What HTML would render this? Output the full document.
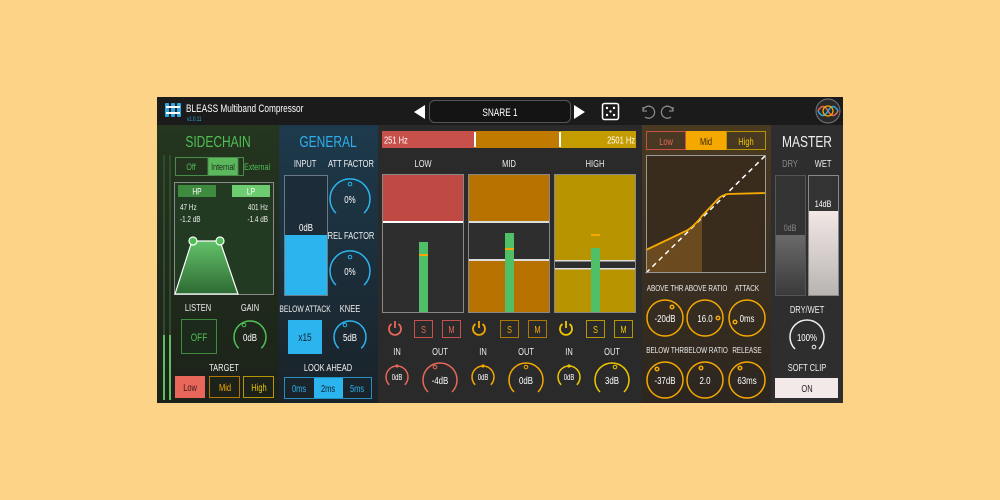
<!DOCTYPE html>
<html><head><meta charset="utf-8"><style>
html,body{margin:0;padding:0;background:#fdd487;width:1000px;height:500px;overflow:hidden}
svg{display:block}
text{font-family:"Liberation Sans",sans-serif;transform-box:fill-box;transform-origin:center;transform:scaleX(0.75)}
</style></head><body>
<svg width="1000" height="500" viewBox="0 0 1000 500" xmlns="http://www.w3.org/2000/svg">
<defs>
<linearGradient id="sc" x1="0" y1="0" x2="0" y2="1"><stop offset="0" stop-color="#24361f"/><stop offset="1" stop-color="#1c2119"/></linearGradient>
<linearGradient id="gn" x1="0" y1="0" x2="0" y2="1"><stop offset="0" stop-color="#1d3a4c"/><stop offset="1" stop-color="#1a2229"/></linearGradient>
<linearGradient id="cp" x1="0" y1="0" x2="0" y2="1"><stop offset="0" stop-color="#4a3a22"/><stop offset="1" stop-color="#2c2620"/></linearGradient>
<linearGradient id="flt" x1="0" y1="0" x2="0" y2="1"><stop offset="0" stop-color="#63c26a"/><stop offset="1" stop-color="#2d6a33"/></linearGradient>
<linearGradient id="dry" x1="0" y1="0" x2="0" y2="1"><stop offset="0" stop-color="#6a6a6a"/><stop offset="1" stop-color="#3a3a3a"/></linearGradient>
<linearGradient id="wet" x1="0" y1="0" x2="0" y2="1"><stop offset="0" stop-color="#f2e8e6"/><stop offset="1" stop-color="#b8b4b2"/></linearGradient>
</defs>
<rect x="157" y="97" width="686" height="306" fill="#1b1b1b"/>
<rect x="157" y="125" width="122" height="278" fill="url(#sc)"/>
<rect x="279" y="125" width="99" height="278" fill="url(#gn)"/>
<rect x="378" y="125" width="264" height="278" fill="#2a2a2a"/>
<rect x="642" y="125" width="129" height="278" fill="url(#cp)"/>
<rect x="771" y="125" width="72" height="278" fill="#2e2e2e"/>

<g fill="#2fa8e0"><rect x="165" y="103" width="4" height="14" rx="1"/><rect x="171" y="103" width="4" height="14" rx="1"/><rect x="177" y="103" width="4" height="14" rx="1"/></g>
<g fill="#fff"><rect x="166" y="106" width="14" height="2"/><rect x="166" y="112" width="14" height="2"/></g>
<text x="186" y="112" font-size="11" fill="#fff" style="transform-origin:left">BLEASS Multiband Compressor</text>
<text x="187" y="121" font-size="6" fill="#2fa8e0" style="transform-origin:left">v1.0.11</text>
<polygon points="414,112 425,105 425,119" fill="#fff"/>
<rect x="429.5" y="100.5" width="141" height="22" rx="5" fill="#141414" stroke="#555"/>
<text x="500" y="116" font-size="11" fill="#fff" text-anchor="middle">SNARE 1</text>
<polygon points="585,112 574,105 574,119" fill="#fff"/>
<rect x="602.5" y="103.5" width="16" height="16" rx="2" fill="none" stroke="#fff" stroke-width="1.5"/>
<g fill="#fff"><circle cx="607" cy="108" r="1.2"/><circle cx="614" cy="108" r="1.2"/><circle cx="610.5" cy="111.5" r="1.2"/><circle cx="607" cy="115" r="1.2"/><circle cx="614" cy="115" r="1.2"/></g>
<path d="M643,107 L643,111 L647,111 M643,110 A6,6 0 1 1 645,117" fill="none" stroke="#888" stroke-width="1.3"/>
<path d="M673,107 L673,111 L669,111 M673,110 A6,6 0 1 0 671,117" fill="none" stroke="#888" stroke-width="1.3"/>
<circle cx="828" cy="111" r="12" fill="#2a2a2a" stroke="#777"/>
<path d="M818,111 Q823,102 828,111 T838,111" fill="none" stroke="#e8675a" stroke-width="1.5"/>
<path d="M818,111 Q823,120 828,111 T838,111" fill="none" stroke="#2fa8e0" stroke-width="1.5"/>
<circle cx="828" cy="111" r="5" fill="none" stroke="#f5a800" stroke-width="1.3"/>

<text x="218" y="147" font-size="16" fill="#4fbf55" text-anchor="middle">SIDECHAIN</text>
<rect x="163" y="155" width="2" height="245" fill="#2f4a2c"/><rect x="169" y="155" width="2" height="245" fill="#2f4a2c"/>
<rect x="163" y="335" width="2" height="65" fill="#5cc062"/><rect x="169" y="335" width="2" height="65" fill="#5cc062"/>
<rect x="175.5" y="157.5" width="68" height="18" fill="none" stroke="#4a8a4a"/>
<rect x="208" y="158" width="30" height="17" fill="#5cb85c"/>
<line x1="208" y1="158" x2="208" y2="175" stroke="#4a8a4a"/><line x1="238" y1="158" x2="238" y2="175" stroke="#4a8a4a"/>
<text x="191" y="170" font-size="9.5" fill="#4fbf55" text-anchor="middle">Off</text>
<text x="223" y="170" font-size="9.5" fill="#1a2a18" text-anchor="middle">Internal</text>
<text x="257" y="170" font-size="9.5" fill="#4fbf55" text-anchor="middle">External</text>
<rect x="174.5" y="182.5" width="99" height="112" fill="#223a22" stroke="#8a8a8a"/>
<rect x="178" y="185" width="38" height="12" fill="#3e8a3f"/><rect x="232" y="185" width="38" height="12" fill="#6ccc6f"/>
<text x="197" y="194.5" font-size="9" fill="#fff" text-anchor="middle">HP</text>
<text x="251" y="194.5" font-size="9" fill="#fff" text-anchor="middle">LP</text>
<text x="180" y="210" font-size="8.5" fill="#eee" style="transform-origin:left">47 Hz</text><text x="180" y="222" font-size="8.5" fill="#eee" style="transform-origin:left">-1.2 dB</text>
<text x="268" y="210" font-size="8.5" fill="#eee" text-anchor="end" style="transform-origin:right">401 Hz</text><text x="268" y="222" font-size="8.5" fill="#eee" text-anchor="end" style="transform-origin:right">-1.4 dB</text>
<path d="M175,294 L192,241 L220,241 L238,294 Z" fill="url(#flt)" stroke="#fff" stroke-width="1.2"/>
<circle cx="193" cy="241" r="4" fill="#4fbf55" stroke="#fff" stroke-width="1.2"/><circle cx="220" cy="241" r="4" fill="#4fbf55" stroke="#fff" stroke-width="1.2"/>
<text x="198" y="311" font-size="10" fill="#eee" text-anchor="middle">LISTEN</text>
<text x="250" y="311" font-size="10" fill="#eee" text-anchor="middle">GAIN</text>
<rect x="181.5" y="319.5" width="35" height="34" fill="#1c2a1b" stroke="#3e8a3f"/>
<text x="199" y="341" font-size="11" fill="#4fbf55" text-anchor="middle">OFF</text>
<path d="M238.7,348.3 A16,16 0 1 1 261.3,348.3" fill="none" stroke="#4fbf55" stroke-width="1.5"/>
<circle cx="244" cy="325" r="1.8" fill="none" stroke="#4fbf55"/>
<text x="250" y="341" font-size="10.5" fill="#fff" text-anchor="middle">0dB</text>
<text x="224" y="371" font-size="10" fill="#eee" text-anchor="middle">TARGET</text>
<rect x="175" y="376" width="30" height="22" fill="#e8675a"/>
<rect x="209.5" y="376.5" width="30" height="21" fill="none" stroke="#b07800"/>
<rect x="243.5" y="376.5" width="30" height="21" fill="none" stroke="#b89600"/>
<text x="190" y="391" font-size="10" fill="#3a1a14" text-anchor="middle">Low</text>
<text x="225" y="391" font-size="10" fill="#f5a800" text-anchor="middle">Mid</text>
<text x="259" y="391" font-size="10" fill="#e8c400" text-anchor="middle">High</text>

<text x="328" y="147" font-size="16" fill="#2fb0ee" text-anchor="middle">GENERAL</text>
<text x="305" y="167" font-size="10" fill="#eee" text-anchor="middle">INPUT</text>
<text x="351" y="167" font-size="10" fill="#eee" text-anchor="middle">ATT FACTOR</text>
<rect x="284.5" y="175.5" width="43" height="120" fill="#1c2c38" stroke="#6a7a86"/>
<rect x="285" y="235" width="42" height="60" fill="#2bb4ee"/>
<text x="306" y="231" font-size="10.5" fill="#fff" text-anchor="middle">0dB</text>
<path d="M335.9,213.1 A20,20 0 1 1 364.1,213.1" fill="none" stroke="#2bb4ee" stroke-width="1.5"/>
<circle cx="350" cy="184" r="1.8" fill="none" stroke="#2bb4ee"/>
<text x="350" y="203" font-size="10.5" fill="#fff" text-anchor="middle">0%</text>
<text x="351" y="239" font-size="10" fill="#eee" text-anchor="middle">REL FACTOR</text>
<path d="M335.9,285.1 A20,20 0 1 1 364.1,285.1" fill="none" stroke="#2bb4ee" stroke-width="1.5"/>
<circle cx="350" cy="257" r="1.8" fill="none" stroke="#2bb4ee"/>
<text x="350" y="275" font-size="10.5" fill="#fff" text-anchor="middle">0%</text>
<text x="305" y="312" font-size="9" fill="#eee" text-anchor="middle">BELOW ATTACK</text>
<text x="350" y="312" font-size="10" fill="#eee" text-anchor="middle">KNEE</text>
<rect x="288" y="320" width="34" height="34" fill="#2bb4ee"/>
<text x="305" y="341" font-size="11" fill="#102030" text-anchor="middle">x15</text>
<path d="M338.7,348.3 A16,16 0 1 1 361.3,348.3" fill="none" stroke="#2bb4ee" stroke-width="1.5"/>
<circle cx="345" cy="325" r="1.8" fill="none" stroke="#2bb4ee"/>
<text x="350" y="341" font-size="10.5" fill="#fff" text-anchor="middle">5dB</text>
<text x="328" y="371" font-size="10" fill="#eee" text-anchor="middle">LOOK AHEAD</text>
<rect x="284.5" y="377.5" width="87" height="21" fill="none" stroke="#2590c0"/>
<rect x="314" y="378" width="29" height="20" fill="#2bb4ee"/>
<text x="299" y="392" font-size="10" fill="#2bb4ee" text-anchor="middle">0ms</text>
<text x="328" y="392" font-size="10" fill="#102030" text-anchor="middle">2ms</text>
<text x="357" y="392" font-size="10" fill="#2bb4ee" text-anchor="middle">5ms</text>

<rect x="382" y="131" width="93" height="17" fill="#c8504a"/>
<rect x="475" y="131" width="85" height="17" fill="#c07a00"/>
<rect x="560" y="131" width="76" height="17" fill="#c49c00"/>
<rect x="474" y="132" width="2" height="15" fill="#fff"/><rect x="559" y="132" width="2" height="15" fill="#fff"/>
<text x="384" y="143.5" font-size="10" fill="#fff" style="transform-origin:left">251 Hz</text>
<text x="635" y="143.5" font-size="10" fill="#fff" text-anchor="end" style="transform-origin:right">2501 Hz</text>
<text x="423" y="167" font-size="10" fill="#eee" text-anchor="middle">LOW</text>
<text x="509" y="167" font-size="10" fill="#eee" text-anchor="middle">MID</text>
<text x="595" y="167" font-size="10" fill="#eee" text-anchor="middle">HIGH</text>
<rect x="382" y="174" width="82" height="139" fill="#2e2e2e"/>
<rect x="382" y="174" width="82" height="48" fill="#bf4a44"/>
<rect x="382" y="221" width="82" height="2" fill="#fff"/>
<rect x="419" y="242" width="9" height="71" fill="#4fc067"/>
<rect x="419" y="254" width="9" height="2" fill="#f5a800"/>
<rect x="382.5" y="174.5" width="81" height="138" fill="none" stroke="#888"/>
<rect x="468" y="174" width="82" height="139" fill="#b87200"/>
<rect x="468" y="222" width="82" height="38" fill="#2e2e2e"/>
<rect x="468" y="221" width="82" height="2" fill="#ddd"/><rect x="468" y="259" width="82" height="2" fill="#ddd"/>
<rect x="505" y="233" width="9" height="80" fill="#4fc067"/>
<rect x="505" y="248" width="9" height="2" fill="#f5a800"/>
<rect x="468.5" y="174.5" width="81" height="138" fill="none" stroke="#888"/>
<rect x="554" y="174" width="82" height="139" fill="#b89400"/>
<rect x="554" y="261" width="82" height="7" fill="#2e2e2e"/>
<rect x="554" y="260" width="82" height="1.5" fill="#ddd"/><rect x="554" y="268" width="82" height="1.5" fill="#ddd"/>
<rect x="591" y="248" width="9" height="65" fill="#4fc067"/>
<rect x="591" y="234" width="9" height="2" fill="#f5a800"/>
<rect x="554.5" y="174.5" width="81" height="138" fill="none" stroke="#888"/>
<g fill="none" stroke-width="1.8">
<path d="M391.5,324 A6,6 0 1 0 398.5,324 M395,321 L395,328" stroke="#e8675a"/>
<path d="M475.5,324 A6,6 0 1 0 482.5,324 M479,321 L479,328" stroke="#f5a800"/>
<path d="M562.5,324 A6,6 0 1 0 569.5,324 M566,321 L566,328" stroke="#f0c800"/>
</g>
<g fill="none" stroke-width="1">
<rect x="414.5" y="320.5" width="18" height="17" stroke="#c8504a"/><rect x="442.5" y="320.5" width="18" height="17" stroke="#c8504a"/>
<rect x="500.5" y="320.5" width="18" height="17" stroke="#b07800"/><rect x="528.5" y="320.5" width="18" height="17" stroke="#b07800"/>
<rect x="586.5" y="320.5" width="18" height="17" stroke="#b89600"/><rect x="614.5" y="320.5" width="18" height="17" stroke="#b89600"/>
</g>
<text x="423.5" y="333" font-size="10" fill="#e8675a" text-anchor="middle">S</text><text x="451.5" y="333" font-size="10" fill="#e8675a" text-anchor="middle">M</text>
<text x="509.5" y="333" font-size="10" fill="#f5a800" text-anchor="middle">S</text><text x="537.5" y="333" font-size="10" fill="#f5a800" text-anchor="middle">M</text>
<text x="595.5" y="333" font-size="10" fill="#f0c800" text-anchor="middle">S</text><text x="623.5" y="333" font-size="10" fill="#f0c800" text-anchor="middle">M</text>
<g font-size="10" fill="#eee" text-anchor="middle">
<text x="397" y="355">IN</text><text x="440" y="355">OUT</text>
<text x="483" y="355">IN</text><text x="526" y="355">OUT</text>
<text x="569" y="355">IN</text><text x="612" y="355">OUT</text>
</g>
<g fill="none" stroke-width="1.5">
<path d="M389.2,384.8 A11,11 0 1 1 404.8,384.8" stroke="#e8675a"/>
<path d="M428,392 A17,17 0 1 1 452,392" stroke="#e8675a"/>
<path d="M475.2,384.8 A11,11 0 1 1 490.8,384.8" stroke="#f5a800"/>
<path d="M514,392 A17,17 0 1 1 538,392" stroke="#f5a800"/>
<path d="M561.2,384.8 A11,11 0 1 1 576.8,384.8" stroke="#f0c800"/>
<path d="M600,392 A17,17 0 1 1 624,392" stroke="#f0c800"/>
</g>
<circle cx="397" cy="366" r="1.6" fill="#e8675a"/><circle cx="435" cy="367" r="1.8" fill="none" stroke="#e8675a"/>
<circle cx="483" cy="366" r="1.6" fill="#f5a800"/><circle cx="526" cy="367" r="1.8" fill="none" stroke="#f5a800"/>
<circle cx="569" cy="366" r="1.6" fill="#f0c800"/><circle cx="615" cy="367" r="1.8" fill="none" stroke="#f0c800"/>
<g fill="#fff" text-anchor="middle">
<text x="397" y="380" font-size="8">0dB</text><text x="440" y="384" font-size="10.5">-4dB</text>
<text x="483" y="380" font-size="8">0dB</text><text x="526" y="384" font-size="10.5">0dB</text>
<text x="569" y="380" font-size="8">0dB</text><text x="612" y="384" font-size="10.5">3dB</text>
</g>

<rect x="646.5" y="131.5" width="39" height="18" fill="none" stroke="#c8504a"/>
<rect x="686" y="131" width="40" height="19" fill="#f5a800"/>
<rect x="726.5" y="131.5" width="39" height="18" fill="none" stroke="#b89600"/>
<text x="666" y="145" font-size="10" fill="#e8675a" text-anchor="middle">Low</text>
<text x="706" y="145" font-size="10" fill="#3a2600" text-anchor="middle">Mid</text>
<text x="746" y="145" font-size="10" fill="#f0c800" text-anchor="middle">High</text>
<rect x="646" y="155" width="120" height="118" fill="#3a2c1c"/>
<path d="M646,250 L690,228 L702,218 L702,273 L646,273 Z" fill="#6a4a1e"/>
<line x1="646" y1="273" x2="766" y2="155" stroke="#fff" stroke-width="1.5" stroke-dasharray="5,4"/>
<path d="M646,250 L688,230 Q696,224 702,216 L718,199 Q722,195 728,194 L766,193" fill="none" stroke="#f5a800" stroke-width="1.8"/>
<rect x="646.5" y="155.5" width="119" height="117" fill="none" stroke="#999"/>
<g font-size="8.5" fill="#eee" text-anchor="middle">
<text x="665" y="291">ABOVE THR</text><text x="706" y="291">ABOVE RATIO</text><text x="747" y="291">ATTACK</text>
<text x="665" y="353">BELOW THR</text><text x="706" y="353">BELOW RATIO</text><text x="747" y="353">RELEASE</text>
</g>
<g fill="none" stroke="#f5a800" stroke-width="1.5">
<circle cx="665" cy="318" r="18"/>
<circle cx="705" cy="318" r="18"/>
<circle cx="747" cy="318" r="18"/>
<circle cx="665" cy="380" r="18"/>
<circle cx="705" cy="380" r="18"/>
<circle cx="747" cy="380" r="18"/>
<circle cx="672" cy="307" r="1.8"/><circle cx="718" cy="318" r="1.8"/><circle cx="735" cy="322" r="1.8"/>
<circle cx="657" cy="369" r="1.8"/><circle cx="701" cy="368" r="1.8"/><circle cx="740" cy="368" r="1.8"/>
</g>
<g font-size="10.5" fill="#fff" text-anchor="middle">
<text x="665" y="322">-20dB</text><text x="705" y="322">16.0</text><text x="747" y="322">0ms</text>
<text x="665" y="384">-37dB</text><text x="705" y="384">2.0</text><text x="747" y="384">63ms</text>
</g>

<text x="807" y="147" font-size="16" fill="#eee" text-anchor="middle">MASTER</text>
<text x="790" y="167" font-size="10" fill="#888" text-anchor="middle">DRY</text>
<text x="823" y="167" font-size="10" fill="#eee" text-anchor="middle">WET</text>
<rect x="775.5" y="175.5" width="30" height="120" fill="#333" stroke="#555"/>
<rect x="776" y="235" width="29" height="60" fill="url(#dry)"/>
<text x="790" y="231" font-size="9.5" fill="#888" text-anchor="middle">0dB</text>
<rect x="808.5" y="175.5" width="30" height="120" fill="#333" stroke="#888"/>
<rect x="809" y="211" width="29" height="84" fill="url(#wet)"/>
<text x="823" y="207" font-size="9.5" fill="#fff" text-anchor="middle">14dB</text>
<text x="807" y="313" font-size="10" fill="#eee" text-anchor="middle">DRY/WET</text>
<path d="M795,349 A17,17 0 1 1 819,349" fill="none" stroke="#eee" stroke-width="1.5"/>
<circle cx="814" cy="347" r="1.8" fill="none" stroke="#eee"/>
<text x="807" y="341" font-size="10.5" fill="#fff" text-anchor="middle">100%</text>
<text x="807" y="371" font-size="10" fill="#eee" text-anchor="middle">SOFT CLIP</text>
<rect x="775" y="378" width="63" height="20" fill="#f3e9e8"/>
<text x="807" y="392" font-size="10" fill="#222" text-anchor="middle">ON</text>
</svg>
</body></html>
